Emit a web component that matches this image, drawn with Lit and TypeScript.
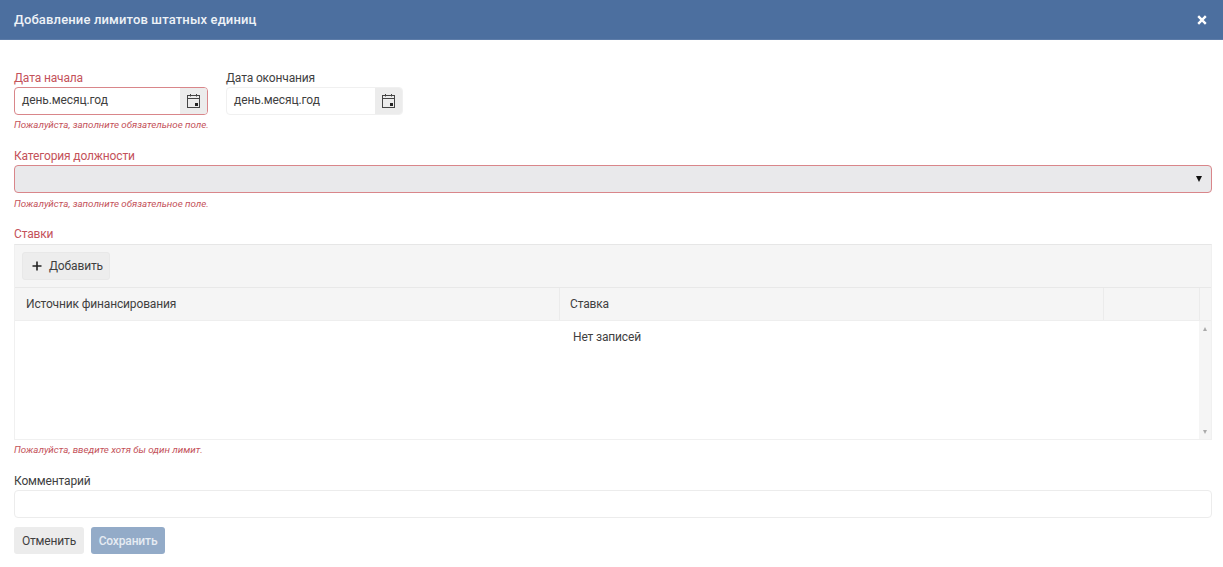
import { LitElement, html, css } from "lit";
import { customElement } from "lit/decorators.js";

const calendar = html`<svg class="cal" width="13" height="14" viewBox="0 0 13 14" fill="none">
  <rect x="0.5" y="1.5" width="12" height="12" stroke="#444" stroke-width="1"></rect>
  <path d="M0.5 4.5H12.5" stroke="#444" stroke-width="1.2"></path>
  <path d="M3.5 0V2.5M9.5 0V2.5" stroke="#444" stroke-width="1"></path>
  <rect x="8" y="9" width="3" height="3" fill="#222"></rect>
</svg>`;

@customElement("app-root")
export class AppRoot extends LitElement {
  static styles = css`
    :host {
      display: block;
      width: 1223px;
      height: 567px;
      overflow: hidden;
      background: #fff;
      font-family: Roboto, "Liberation Sans", sans-serif;
      font-size: 12px;
      letter-spacing: -0.15px;
      color: #3f3f3f;
    }
    .head {
      height: 40px;
      background: #4c6f9f;
      color: #eef2f7;
      display: flex;
      align-items: center;
      justify-content: space-between;
      padding: 0 14px;
      font-size: 13px;
      letter-spacing: 0.15px;
      font-weight: 500;
      box-sizing: border-box;
      border-bottom: 1px solid #5d7ca8;
    }
    .close { width: 10px; height: 10px; margin-right: 2px; display: block; }
    .body { padding: 29px 11px 0 14px; display: flex; flex-direction: column; }
    .dates { display: flex; gap: 18px; }
    .col1 { width: 194px; }
    .label { height: 18px; line-height: 18px; white-space: nowrap; }
    .label.tall { height: 19px; }
    .req { color: #c4525a; }
    .err {
      height: 14px;
      line-height: 14px;
      margin-top: 3px;
      font-size: 9.75px;
      letter-spacing: 0;
      font-style: italic;
      color: #c4525a;
      white-space: nowrap;
    }
    .err.low { margin-top: 4px; }
    .date {
      display: flex;
      width: 177px;
      height: 28px;
      box-sizing: border-box;
      border: 1px solid #f0f0f0;
      border-radius: 4px;
      overflow: hidden;
      background: #fff;
    }
    .date.one { width: 194px; border-color: #d9868a; }
    .date .val { flex: 1; line-height: 25px; padding-left: 7px; letter-spacing: -0.1px; }
    .date .btn {
      width: 27px;
      background: #ececec;
      display: flex;
      align-items: center;
      justify-content: center;
    }
    .cal { display: block; }
    .gap1 { height: 15px; }
    .gap3 { height: 14px; }
    .select {
      height: 28px;
      box-sizing: border-box;
      background: #e9e9eb;
      border: 1px solid #d9868a;
      border-radius: 4px;
      display: flex;
      align-items: center;
      justify-content: flex-end;
      padding-right: 9px;
    }
    .arrow {
      width: 0;
      height: 0;
      border-left: 3.5px solid transparent;
      border-right: 3.5px solid transparent;
      border-top: 6px solid #111;
    }
    .grid {
      height: 196px;
      box-sizing: border-box;
      border: 1px solid #f0f0f0;
      border-top-color: #e6e6e6;
      display: flex;
      flex-direction: column;
    }
    .toolbar {
      height: 43px;
      box-sizing: border-box;
      background: #f5f5f5;
      padding: 7px;
      border-bottom: 1px solid #e8e8e8;
    }
    .add {
      width: 88px;
      height: 28px;
      box-sizing: border-box;
      background: #ededed;
      border: 1px solid #e8e8e8;
      border-radius: 3px;
      display: flex;
      align-items: center;
      gap: 7px;
      padding-left: 9px;
    }
    .gh {
      height: 33px;
      flex: none;
      display: grid;
      grid-template-columns: 545px 544px 96px 1fr;
      background: #f5f5f5;
      border-bottom: 1px solid #eeeeee;
      box-sizing: border-box;
    }
    .gh div {
      border-right: 1px solid #ebebeb;
      padding-left: 10px;
      line-height: 32px;
    }
    .gh div:first-child { padding-left: 11px; }
    .gh div:last-child { border-right: 0; }
    .gb { flex: 1; display: flex; }
    .rows { flex: 1; padding-top: 8px; line-height: 16px; }
    .rows span { display: block; width: 1184px; text-align: center; }
    .sb {
      width: 12px;
      background: #f5f5f5;
      display: flex;
      flex-direction: column;
      justify-content: space-between;
      align-items: center;
      padding: 6px 0 5px;
      box-sizing: border-box;
    }
    .up { width: 0; height: 0; border: 2.5px solid transparent; border-top: 0; border-bottom: 4px solid #aaa; }
    .down { width: 0; height: 0; border: 2.5px solid transparent; border-bottom: 0; border-top: 4px solid #aaa; }
    .gap2 { height: 15px; }
    .input {
      height: 28px;
      box-sizing: border-box;
      border: 1px solid #ececec;
      border-radius: 4px;
      background: #fff;
    }
    .actions { display: flex; gap: 7px; margin-top: 9px; }
    .b {
      height: 27px;
      border-radius: 3px;
      display: flex;
      align-items: center;
      justify-content: center;
      box-sizing: border-box;
    }
    .cancel { width: 70px; background: #ececec; }
    .save { width: 74px; background: #93abc8; color: #e6ecf3; font-weight: 500; }
  `;

  render() {
    return html`
      <div class="head">
        <span>Добавление лимитов штатных единиц</span>
        <svg class="close" viewBox="0 0 10 10"><path d="M1.2 1.2L8.8 8.8M8.8 1.2L1.2 8.8" stroke="#fff" stroke-width="2.4"></path></svg>
      </div>
      <div class="body">
        <div class="dates">
          <div class="col1">
            <div class="label req">Дата начала</div>
            <div class="date one"><div class="val">день.месяц.год</div><div class="btn">${calendar}</div></div>
            <div class="err">Пожалуйста, заполните обязательное поле.</div>
          </div>
          <div>
            <div class="label">Дата окончания</div>
            <div class="date"><div class="val">день.месяц.год</div><div class="btn">${calendar}</div></div>
          </div>
        </div>
        <div class="gap1"></div>
        <div class="label req">Категория должности</div>
        <div class="select"><div class="arrow"></div></div>
        <div class="err low">Пожалуйста, заполните обязательное поле.</div>
        <div class="gap3"></div>
        <div class="label tall req">Ставки</div>
        <div class="grid">
          <div class="toolbar">
            <div class="add">
              <svg width="10" height="10" viewBox="0 0 10 10"><path d="M5 0.5V9.5M0.5 5H9.5" stroke="#222" stroke-width="1.6"></path></svg>
              <span>Добавить</span>
            </div>
          </div>
          <div class="gh"><div>Источник финансирования</div><div>Ставка</div><div></div><div></div></div>
          <div class="gb">
            <div class="rows"><span>Нет записей</span></div>
            <div class="sb"><div class="up"></div><div class="down"></div></div>
          </div>
        </div>
        <div class="err">Пожалуйста, введите хотя бы один лимит.</div>
        <div class="gap2"></div>
        <div class="label">Комментарий</div>
        <div class="input"></div>
        <div class="actions">
          <div class="b cancel">Отменить</div>
          <div class="b save">Сохранить</div>
        </div>
      </div>
    `;
  }
}
